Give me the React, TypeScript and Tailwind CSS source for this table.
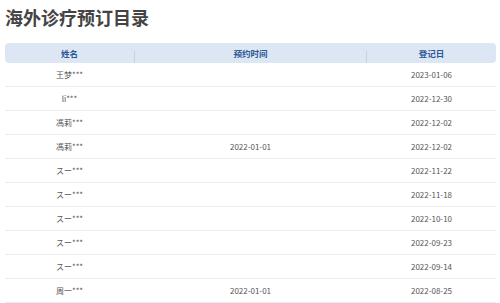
const rows = [
  { name: "王梦***", date: "", reg: "2023-01-06" },
  { name: "li***", date: "", reg: "2022-12-30" },
  { name: "馮莉***", date: "", reg: "2022-12-02" },
  { name: "馮莉***", date: "2022-01-01", reg: "2022-12-02" },
  { name: "スー***", date: "", reg: "2022-11-22" },
  { name: "スー***", date: "", reg: "2022-11-18" },
  { name: "スー***", date: "", reg: "2022-10-10" },
  { name: "スー***", date: "", reg: "2022-09-23" },
  { name: "スー***", date: "", reg: "2022-09-14" },
  { name: "周一***", date: "2022-01-01", reg: "2022-08-25" },
];

const font = { fontFamily: '"Noto Sans CJK SC", "Noto Sans CJK JP", "Liberation Sans", sans-serif' };

const App = () => {
  return (
    <div className="w-[500px] h-[303px] overflow-hidden bg-white px-[5px] pt-[4px]" style={font}>
      <h1 className="text-[18px] leading-[27px] font-bold text-[#444] tracking-[0px]">海外诊疗预订目录</h1>
      <div className="mt-[12px] w-[491px]">
        <div className="grid grid-cols-[129px_233px_129px] h-[20px] items-center bg-[#dce7f3] rounded-[4px] text-[8.5px] font-bold text-[#2b5797]">
          <div className="text-center">姓名</div>
          <div className="relative text-center">
            <span className="absolute left-0 top-[4px] h-[12px] w-px bg-[#c4d2e2]" />
            预约时间
            <span className="absolute right-0 top-[4px] h-[12px] w-px bg-[#c4d2e2]" />
          </div>
          <div className="text-center">登记日</div>
        </div>
        {rows.map((r, i) => (
          <div
            key={i}
            className="grid grid-cols-[129px_233px_129px] h-[24px] items-center border-b border-[#ececec] text-[8px] text-[#555]"
          >
            <div className="text-center">{r.name}</div>
            <div className="text-center">{r.date}</div>
            <div className="text-center">{r.reg}</div>
          </div>
        ))}
      </div>
    </div>
  );
};

export default App;
